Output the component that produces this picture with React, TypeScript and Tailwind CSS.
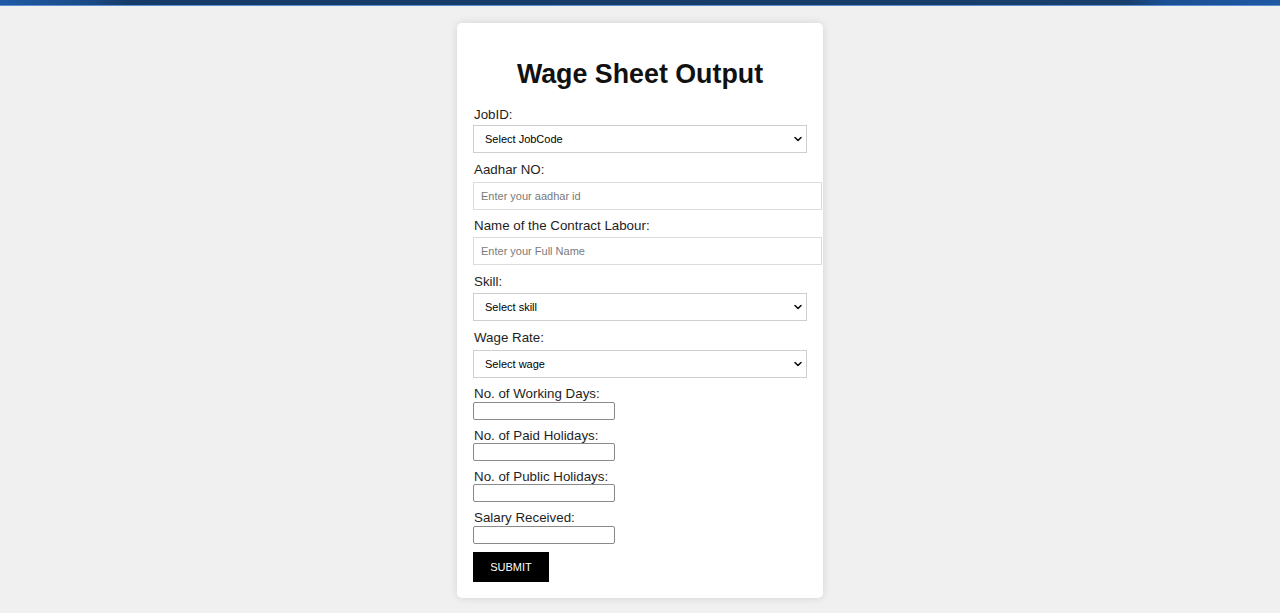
import React from "react";

const font = { fontFamily: '"Liberation Sans", Arial, sans-serif' };

function Chevron() {
  return (
    <svg
      className="pointer-events-none absolute right-[5px] top-1/2 -translate-y-1/2"
      width="8"
      height="5"
      viewBox="0 0 8 5"
      fill="none"
    >
      <path d="M1 1 L4 4 L7 1" stroke="#111" strokeWidth="1.6" strokeLinecap="round" strokeLinejoin="round" />
    </svg>
  );
}

function Select({ text, className }: { text: string; className?: string }) {
  return (
    <div className={"relative w-[334px] h-[28px] " + (className ?? "")}>
      <select
        className="w-full h-full appearance-none border border-[#cfcfcf] bg-white pl-[11px] text-[11px] text-black outline-none"
        style={font}
        defaultValue=""
      >
        <option value="">{text}</option>
      </select>
      <Chevron />
    </div>
  );
}

function TextInput({ placeholder, className }: { placeholder: string; className?: string }) {
  return (
    <input
      type="text"
      placeholder={placeholder}
      className={
        "block w-[349px] h-[28px] border border-[#dcdcdc] bg-white pl-[7px] text-[11px] text-black placeholder:text-[#7a7a7a] outline-none " +
        (className ?? "")
      }
      style={font}
    />
  );
}

function SmallInput({ className }: { className?: string }) {
  return (
    <input
      type="text"
      className={
        "block w-[142px] h-[18px] border border-[#8a8a8a] rounded-[2px] bg-white text-[11px] outline-none " +
        (className ?? "")
      }
      style={font}
    />
  );
}

function Label({ children, className }: { children: React.ReactNode; className?: string }) {
  return (
    <label className={"block text-[13.33px] leading-[15px] text-[#1e1e1e] pl-[1px] " + (className ?? "")}>
      {children}
    </label>
  );
}

export default function App() {
  return (
    <div className="min-h-screen bg-[#f0f0f0]" style={font}>
      <div
        className="h-[5px]"
        style={{
          background:
            "linear-gradient(to right, #1f5aa6 0%, #1a4a86 7%, #163b68 10%, #173c69 50%, #183e6c 88%, #1b4f93 91%, #1f58a3 100%)",
        }}
      />
      <div className="h-[1px] bg-[#5b8fcf]" />
      <div className="mx-auto mt-[17px] w-[366px] rounded-[5px] bg-white pl-[16px] pr-[16px] pt-[36px] pb-[16px] shadow-[0_0_8px_rgba(0,0,0,0.12)]">
        <h1 className="text-center text-[26.8px] font-bold leading-[30px] text-[#111]">Wage Sheet Output</h1>

        <Label className="mt-[18px]">JobID:</Label>
        <Select text="Select JobCode" className="mt-[3px]" />

        <Label className="mt-[9px]">Aadhar NO:</Label>
        <TextInput placeholder="Enter your aadhar id" className="mt-[5px]" />

        <Label className="mt-[8px]">Name of the Contract Labour:</Label>
        <TextInput placeholder="Enter your Full Name" className="mt-[4px]" />

        <Label className="mt-[9px]">Skill:</Label>
        <Select text="Select skill" className="mt-[4px]" />

        <Label className="mt-[9px]">Wage Rate:</Label>
        <Select text="Select wage" className="mt-[5px]" />

        <Label className="mt-[8px]">No. of Working Days:</Label>
        <SmallInput className="mt-[1px]" />

        <Label className="mt-[8px]">No. of Paid Holidays:</Label>
        <SmallInput />

        <Label className="mt-[8px]">No. of Public Holidays:</Label>
        <SmallInput />

        <Label className="mt-[8px]">Salary Received:</Label>
        <SmallInput className="mt-[1px]" />

        <button
          type="button"
          className="mt-[8px] block h-[30px] w-[76px] bg-black text-[11px] text-white"
          style={font}
        >
          SUBMIT
        </button>
      </div>
    </div>
  );
}
